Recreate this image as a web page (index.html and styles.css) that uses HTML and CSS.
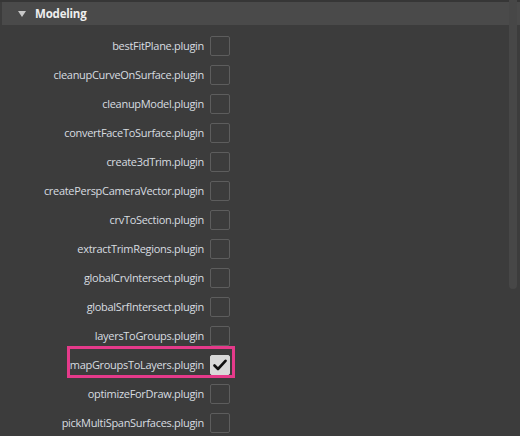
FILE: index.html
```html
<!DOCTYPE html>
<html>
<head>
<meta charset="utf-8">
<link rel="stylesheet" href="styles.css">
</head>
<body>
<div class="panel">
  <div class="topstrip"></div>
  <div class="header">
    <span class="tri"></span>
    <span class="title">Modeling</span>
  </div>
  <div class="list">
    <div class="row"><span class="label">bestFitPlane.plugin</span><span class="box"></span></div>
    <div class="row"><span class="label">cleanupCurveOnSurface.plugin</span><span class="box"></span></div>
    <div class="row"><span class="label">cleanupModel.plugin</span><span class="box"></span></div>
    <div class="row"><span class="label">convertFaceToSurface.plugin</span><span class="box"></span></div>
    <div class="row"><span class="label">create3dTrim.plugin</span><span class="box"></span></div>
    <div class="row"><span class="label">createPerspCameraVector.plugin</span><span class="box"></span></div>
    <div class="row"><span class="label">crvToSection.plugin</span><span class="box"></span></div>
    <div class="row"><span class="label">extractTrimRegions.plugin</span><span class="box"></span></div>
    <div class="row"><span class="label">globalCrvIntersect.plugin</span><span class="box"></span></div>
    <div class="row"><span class="label">globalSrfIntersect.plugin</span><span class="box"></span></div>
    <div class="row"><span class="label">layersToGroups.plugin</span><span class="box"></span></div>
    <div class="row highlight"><span class="label">mapGroupsToLayers.plugin</span><span class="box checked"><svg width="14" height="12" viewBox="0 0 14 12"><path d="M1.5 6.5 L5 10 L12.5 1.8" fill="none" stroke="#111" stroke-width="2.6" stroke-linecap="round" stroke-linejoin="round"/></svg></span></div>
    <div class="row"><span class="label">optimizeForDraw.plugin</span><span class="box"></span></div>
    <div class="row"><span class="label">pickMultiSpanSurfaces.plugin</span><span class="box"></span></div>
  </div>
  <div class="scrollbar"></div>
</div>
</body>
</html>
```
FILE: styles.css
```css
html, body {
  margin: 0;
  padding: 0;
  background: #3c3c3c;
}
.panel {
  position: relative;
  width: 520px;
  height: 436px;
  overflow: hidden;
  background: #3c3c3c;
  font-family: "Open Sans", "Noto Sans", sans-serif;
}
.topstrip {
  height: 2px;
  background: #363636;
}
.header {
  height: 23px;
  background: #4a4a4a;
  margin-left: 2px;
  display: flex;
  align-items: center;
}
.tri {
  width: 0;
  height: 0;
  border-left: 4.5px solid transparent;
  border-right: 4.5px solid transparent;
  border-top: 6px solid #c8c8c8;
  margin-left: 16px;
  margin-right: 9px;
  margin-top: 1px;
}
.title {
  font-weight: 700;
  font-size: 11.5px;
  letter-spacing: -0.2px;
  color: #eeeeee;
}
.list {
  padding-top: 6px;
  display: flex;
  flex-direction: column;
}
.row {
  position: relative;
  height: 29px;
  display: flex;
  align-items: center;
}
.label {
  width: 204px;
  text-align: right;
  font-size: 11px;
  letter-spacing: -0.3px;
  color: #d8dce0;
  white-space: nowrap;
}
.box {
  width: 18px;
  height: 18px;
  margin-left: 6px;
  border: 1px solid #5d5d5d;
  border-radius: 2px;
  display: flex;
  align-items: center;
  justify-content: center;
}
.box.checked {
  background: #d9d9d9;
  border-color: #d9d9d9;
}
.highlight::before {
  content: "";
  position: absolute;
  left: 67px;
  top: -4px;
  width: 162px;
  height: 26px;
  border: 3px solid #e53a8a;
}
.scrollbar {
  position: absolute;
  right: 3px;
  top: 0;
  width: 8px;
  height: 289px;
  background: #474747;
  border-radius: 0 0 4px 4px;
}
```
